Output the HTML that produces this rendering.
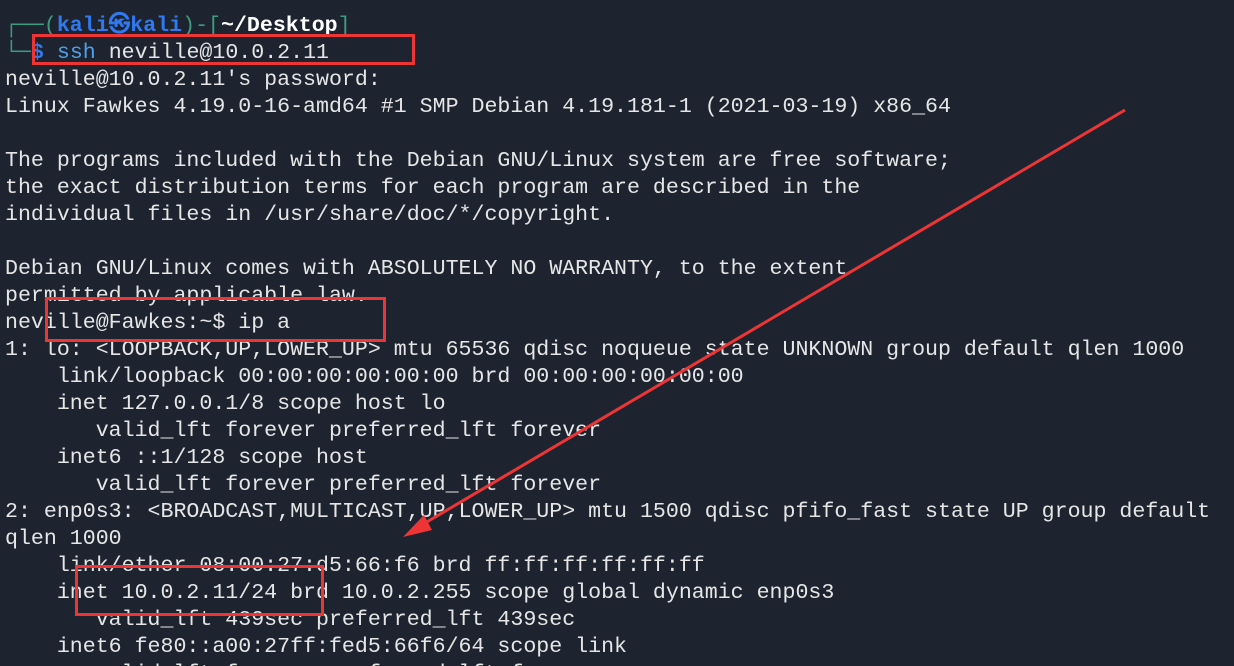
<!DOCTYPE html>
<html><head><meta charset="utf-8"><style>
html,body{margin:0;padding:0;width:1234px;height:666px;overflow:hidden;}
body{background:#1d2430;position:relative;}
pre{margin:0;position:absolute;left:5px;top:13px;font-family:"Liberation Mono","DejaVu Sans Mono",monospace;font-size:21.6px;line-height:27px;color:#e6e6e6;white-space:pre;}
.g{color:#3d9b80}.b{color:#2f7af0;font-weight:bold}.w{color:#fff;font-weight:bold}.c{color:#4ea0e8}
.box{position:absolute;border:3px solid #ee3535;box-sizing:border-box;}
</style></head><body>
<pre><span class="g">┌──(</span><span class="b">kali㉿kali</span><span class="g">)-[</span><span class="w">~/Desktop</span><span class="g">]</span>
<span class="g">└─</span><span class="b">$</span> <span class="c">ssh</span> neville@10.0.2.11
neville@10.0.2.11's password:
Linux Fawkes 4.19.0-16-amd64 #1 SMP Debian 4.19.181-1 (2021-03-19) x86_64

The programs included with the Debian GNU/Linux system are free software;
the exact distribution terms for each program are described in the
individual files in /usr/share/doc/*/copyright.

Debian GNU/Linux comes with ABSOLUTELY NO WARRANTY, to the extent
permitted by applicable law.
neville@Fawkes:~$ ip a
1: lo: &lt;LOOPBACK,UP,LOWER_UP&gt; mtu 65536 qdisc noqueue state UNKNOWN group default qlen 1000
    link/loopback 00:00:00:00:00:00 brd 00:00:00:00:00:00
    inet 127.0.0.1/8 scope host lo
       valid_lft forever preferred_lft forever
    inet6 ::1/128 scope host
       valid_lft forever preferred_lft forever
2: enp0s3: &lt;BROADCAST,MULTICAST,UP,LOWER_UP&gt; mtu 1500 qdisc pfifo_fast state UP group default
qlen 1000
    link/ether 08:00:27:d5:66:f6 brd ff:ff:ff:ff:ff:ff
    inet 10.0.2.11/24 brd 10.0.2.255 scope global dynamic enp0s3
       valid_lft 439sec preferred_lft 439sec
    inet6 fe80::a00:27ff:fed5:66f6/64 scope link
       valid_lft forever preferred_lft forever</pre>
<div class="box" style="left:32px;top:34px;width:383px;height:31px"></div>
<div class="box" style="left:45px;top:297px;width:341px;height:45px"></div>
<div class="box" style="left:75px;top:565px;width:249px;height:51px"></div>
<svg width="1234" height="666" style="position:absolute;left:0;top:0">
<line x1="1125" y1="110" x2="420" y2="526" stroke="#ee3535" stroke-width="3"/>
<polygon points="403,537 424,515 432,530" fill="#ee3535"/>
</svg>
</body></html>
